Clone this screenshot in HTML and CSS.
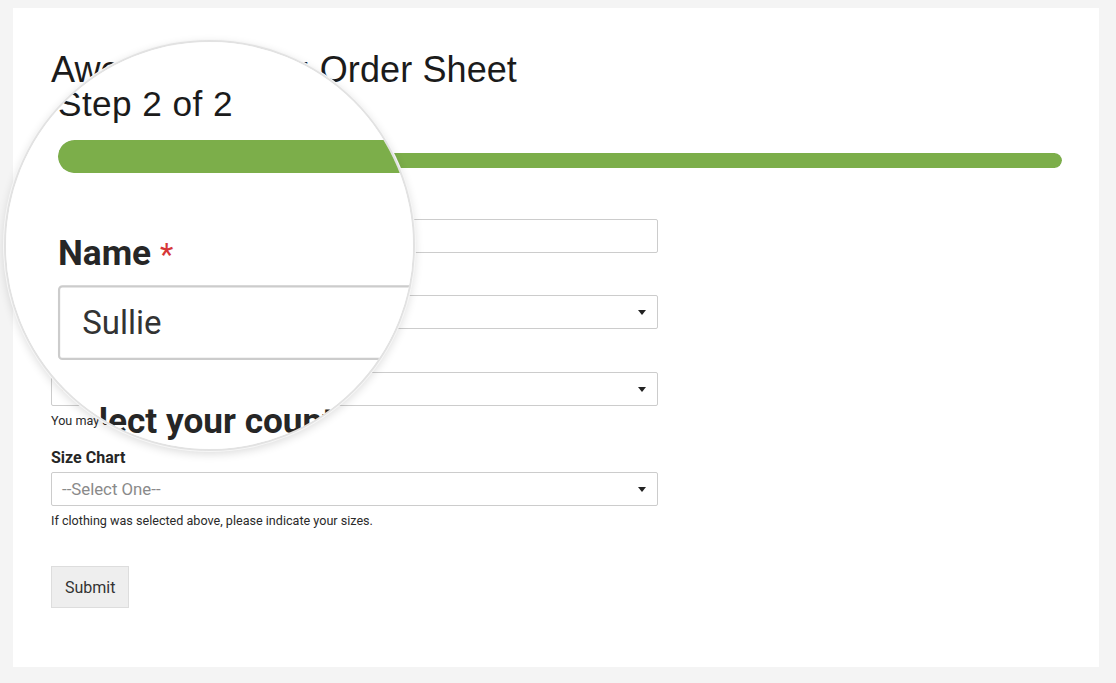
FILE: index.html
```html
<!DOCTYPE html>
<html lang="en">
<head>
<meta charset="utf-8">
<title>Awesome Swag Order Sheet</title>
<link rel="stylesheet" href="styles.css">
</head>
<body>
<div class="page">
  <div class="card">
    <h1 class="title">Awesome Swag Order Sheet</h1>
    <div class="steps">Step 2 of 2</div>
    <div class="progress"><div class="progress-fill" style="width:100%"></div></div>
    <form class="form">
      <div class="fields">
        <div class="field">
          <label class="label">Name <span class="req">*</span></label>
          <div class="input">Sullie</div>
        </div>
        <div class="field">
          <label class="label">Select your country</label>
          <div class="select"><span class="placeholder">--Select One--</span></div>
        </div>
        <div class="field">
          <label class="label">Swag Items</label>
          <div class="select"><span class="placeholder">--Select One--</span></div>
          <div class="desc">You may select more than one.</div>
        </div>
        <div class="field">
          <label class="label">Size Chart</label>
          <div class="select"><span class="placeholder">--Select One--</span></div>
          <div class="desc">If clothing was selected above, please indicate your sizes.</div>
        </div>
      </div>
      <button class="submit" type="button">Submit</button>
    </form>
  </div>

  <div class="lens" aria-hidden="true">
    <div class="lens-view">
      <div class="page">
        <div class="card">
          <div class="title">Awesome Swag Order Sheet</div>
          <div class="steps">Step 2 of 2</div>
          <div class="progress"><div class="progress-fill" style="width:100%"></div></div>
          <div class="form">
            <div class="fields">
              <div class="field">
                <div class="label">Name <span class="req">*</span></div>
                <div class="input">Sullie</div>
              </div>
              <div class="field">
                <div class="label">Select your country</div>
                <div class="select"><span class="placeholder">--Select One--</span></div>
              </div>
              <div class="field">
                <div class="label">Swag Items</div>
                <div class="select"><span class="placeholder">--Select One--</span></div>
                <div class="desc">You may select more than one.</div>
              </div>
            </div>
          </div>
        </div>
      </div>
    </div>
  </div>
</div>
</body>
</html>
```

FILE: styles.css
```css
html, body {
  margin: 0;
  padding: 0;
  overflow: hidden;
}

body {
  background: #f4f4f4;
  font-family: Roboto, "Noto Sans", Arial, sans-serif;
  color: #262626;
}

.page {
  position: relative;
  box-sizing: border-box;
  width: 1116px;
  height: 683px;
  padding: 8px 17px 16px 13px;
  background: #f4f4f4;
}

.card {
  box-sizing: border-box;
  height: 659px;
  background: #ffffff;
  padding: 42px 37px 0 38px;
}

.title {
  margin: 0;
  font: 400 36px/40px "Liberation Sans", Arial, sans-serif;
  letter-spacing: 0.1px;
  color: #1b1b1b;
}

.steps {
  margin-top: 36.7px;
  font: 400 16px/20px "Liberation Sans", Arial, sans-serif;
  letter-spacing: 0.2px;
  color: #1b1b1b;
}

.progress {
  margin-top: 6.3px;
  height: 15px;
  border-radius: 8px;
  background: #e8e8e8;
  overflow: hidden;
}

.progress-fill {
  height: 100%;
  border-radius: 8px;
  background: #7cae4a;
}

.form {
  display: flex;
  flex-direction: column;
  align-items: flex-start;
  margin-top: 27px;
}

.fields {
  display: flex;
  flex-direction: column;
  gap: 18.5px;
  width: 60%;
}

.label {
  display: block;
  height: 20px;
  margin-bottom: 4px;
  font: 700 16px/20px Roboto, "Noto Sans", Arial, sans-serif;
  color: #262626;
}

.req {
  color: #d63637;
  font-weight: 400;
  font-size: 14px;
  line-height: 1;
}

.input,
.select {
  position: relative;
  box-sizing: border-box;
  height: 34px;
  border: 1px solid #cccccc;
  border-radius: 2px;
  padding: 0 10px;
  background: #fff;
  font-size: 15px;
  line-height: 32px;
  color: #333333;
}

.select .placeholder {
  font-size: 16.8px;
  color: #8a8a8a;
}

.select::after {
  content: "";
  position: absolute;
  right: 11px;
  top: 14px;
  border-left: 4px solid transparent;
  border-right: 4px solid transparent;
  border-top: 5px solid #222;
}

.desc {
  margin-top: 7.5px;
  font-size: 12.6px;
  line-height: 16px;
  color: #2a2a2a;
}

.submit {
  margin-top: 37px;
  height: 42px;
  padding: 0 13px;
  border: 1px solid #dddddd;
  border-radius: 0;
  background: #eeeeee;
  font: 400 16px Roboto, "Noto Sans", Arial, sans-serif;
  color: #333333;
}

.lens {
  position: absolute;
  left: 4px;
  top: 40px;
  box-sizing: border-box;
  width: 411px;
  height: 411px;
  border-radius: 50%;
  overflow: hidden;
  background: #fff;
  border: 2px solid #e2e2e2;
  box-shadow: 0 0 0 1px #f6f6f6, 0 3px 10px rgba(0, 0, 0, 0.14);
}

.lens-view {
  position: absolute;
  left: -6px;
  top: -42px;
  width: 1116px;
  height: 683px;
  transform-origin: 45.2px 163.8px;
  transform: scale(2.2);
}
```
